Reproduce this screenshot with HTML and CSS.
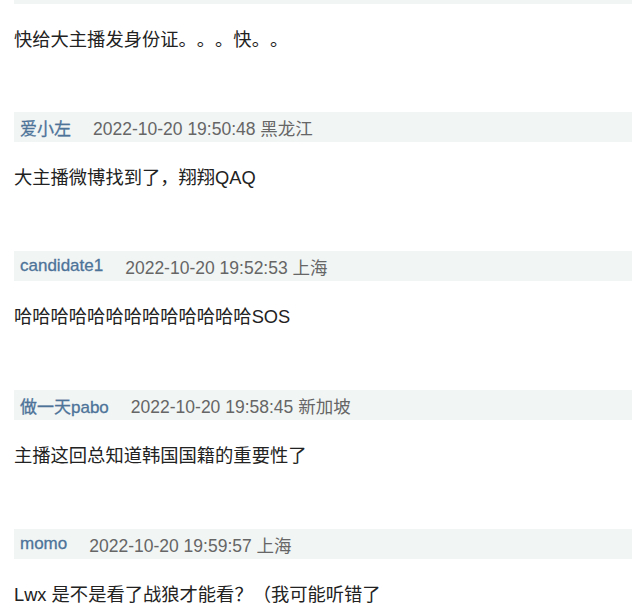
FILE: index.html
```html
<!DOCTYPE html>
<html lang="zh-CN">
<head>
  <meta charset="UTF-8" />
  <title>评论</title>
  <link rel="stylesheet" href="styles.css">
</head>
<body>
  <div class="list">
    <div class="strip"></div>
    <p class="text first">快给大主播发身份证。。。快。。</p>

    <div class="comment">
      <div class="meta"><span class="user">爱小左</span><span class="date">2022-10-20 19:50:48 黑龙江</span></div>
      <p class="text">大主播微博找到了，翔翔QAQ</p>
    </div>
    <div class="comment">
      <div class="meta"><span class="user">candidate1</span><span class="date">2022-10-20 19:52:53 上海</span></div>
      <p class="text">哈哈哈哈哈哈哈哈哈哈哈哈哈SOS</p>
    </div>
    <div class="comment">
      <div class="meta"><span class="user">做一天pabo</span><span class="date">2022-10-20 19:58:45 新加坡</span></div>
      <p class="text">主播这回总知道韩国国籍的重要性了</p>
    </div>
    <div class="comment">
      <div class="meta"><span class="user">momo</span><span class="date">2022-10-20 19:59:57 上海</span></div>
      <p class="text">Lwx 是不是看了战狼才能看？（我可能听错了</p>
    </div>
  </div>
</body>
</html>
```

FILE: styles.css
```css
body {
  margin: 0;
  background: #fff;
  font-family: "Liberation Sans", "Noto Sans CJK SC", sans-serif;
  overflow: hidden;
}
.list {
  padding-left: 14px;
  width: 618px;
}
.strip {
  height: 4px;
  background: #f1f5f4;
}
.text {
  margin: 24px 0 0;
  font-size: 18.3px;
  line-height: 24px;
  color: #222;
  white-space: nowrap;
  text-spacing-trim: space-all;
}
.first {
  margin-bottom: 60px;
}
.comment {
  margin-bottom: 61px;
}
.comment:last-child {
  margin-bottom: 0;
}
.meta {
  display: flex;
  align-items: center;
  height: 30px;
  padding-left: 6px;
  background: #f1f5f4;
  font-size: 17px;
}
.user {
  color: #4d7399;
  -webkit-text-stroke: 0.3px #4d7399;
}
.date {
  margin-left: 22px;
  font-size: 17.5px;
  color: #666;
}
```
